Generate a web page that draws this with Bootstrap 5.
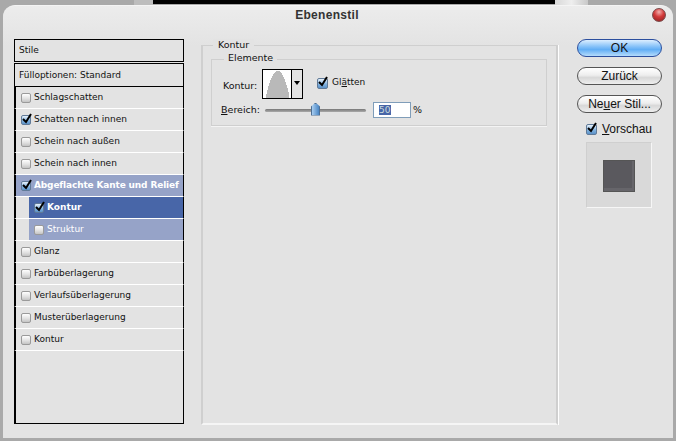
<!DOCTYPE html>
<html lang="de"><head><meta charset="utf-8"><title>Ebenenstil</title>
<link href="https://cdn.jsdelivr.net/npm/bootstrap@5.3.0/dist/css/bootstrap.min.css" rel="stylesheet">
<style>
html,body{height:441px;overflow:hidden}
body{background:#a9a9a9;font:9px/1 "DejaVu Sans",sans-serif;color:#111;width:676px}
.strip{height:5px}
.strip i{display:block;height:5px}
.s1{width:134px}.s2{width:19px;background:#bdbdbd}.s3{width:402px;height:4px!important;background:#000}.s4{width:33px;background:linear-gradient(90deg,#d8d8d8,#eee,#c8c8c8)}
.win{width:670px;height:433px;margin-left:3px;background:linear-gradient(#ececec,#e3e3e3 40px);border-radius:12px 12px 0 0;position:relative;border-top:1px solid #f4f4f4}
.ttl{height:32px;font:bold 12px/18px "Liberation Sans",sans-serif;color:#333;letter-spacing:.3px;padding-right:22px}
.redb{position:absolute;right:7px;top:2px;width:14px;height:14px;border-radius:50%;background:radial-gradient(circle at 50% 25%,#f2b0ae 0,#d33a3a 45%,#8c1e1e 100%);border:1px solid #7a4a4a}
.body2{padding-left:11px;height:400px}
.lst{width:170px;height:385px;margin-top:1px;background:#e3e3e3;border-radius:0;border:0}
.hd{border:1px solid #000;height:23px;padding-left:4px;line-height:20px;background:#e3e3e3}
.hd+.hd{margin-top:1px;height:24px;line-height:22px}
.rw{height:22px;border:0;border-radius:0!important;background:#e3e3e3;padding:0 0 0 5px;border-bottom:1px solid #fff;border-left:2px solid #000;border-right:1px solid #000;gap:3px;color:#111;white-space:nowrap}
.rw.sub{background:linear-gradient(90deg,#e3e3e3 13px,#96a3c8 13px);color:#fff}
.rw.sub>.cbx{margin-left:13px}
.rw.on{background:#96a3c8;color:#fff;font-weight:bold;letter-spacing:-.15px}
.rw.sel{background:linear-gradient(90deg,#e3e3e3 13px,#4866a8 13px);font-weight:bold}
.fill{flex:1;border:1px solid #000;border-top:0;border-left-width:2px}
.cbx{width:10px;height:10px;flex:none;border:1px solid #9a9a9a;border-radius:2px;background:linear-gradient(#fff,#e2e2e2 55%,#c4c4c4);position:relative;display:block}
.cbx.chk{background:linear-gradient(#e8f2fb,#7fb0de 60%,#5c92c8);border-color:#607a98}
.cbx svg{position:absolute;left:-1px;top:-3px;width:12px;height:12px}
.mid{width:357px;margin-left:17px;margin-top:7px;height:380px;border:2px solid #cfcfcf;border-top-width:1px;border-bottom-color:#f5f5f5;box-shadow:1px 0 0 #fff;position:relative}
.lg{position:absolute;background:#e3e3e3;padding:0 5px;font-size:10px;line-height:12px}
.lg1{left:10px;top:-7px;font-size:9.5px}
.inn{margin:13px 9px 0 8px;height:67px;border:1px solid #cfcfcf;position:relative;padding:9px 0 0 9px;box-shadow:0 1px 0 #f4f4f4}
.lg2{left:12px;top:-8px;padding:0 4px;font-size:9.5px}
.lb1{width:39px;margin-left:2px;padding-top:12px;font-size:9.5px}
.crv{width:41px;height:30px;border:1px solid #000;background:#fff;position:relative}
.crv b{position:absolute;right:0;top:0;bottom:0;width:11px;background:#e3e3e3;border-left:1px solid #000}
.crv b::after{content:"";position:absolute;left:2px;top:11px;border:3px solid transparent;border-top:4px solid #000;border-bottom:0}
.crv svg{position:absolute;left:1px;top:0;width:27px;height:28px}
u{text-underline-offset:1px}
.lb2{width:38px;font-size:9.5px}
.trk{width:101px;height:3px;margin-left:6px;background:linear-gradient(#777,#aaa);border-radius:2px;position:relative}
.thm{position:absolute;left:46px;top:-6px;width:9px;height:13px;background:linear-gradient(90deg,#a8cdf0,#4a86c4);border:1px solid #4d6f94;clip-path:polygon(50% 0,100% 30%,100% 100%,0 100%,0 30%)}
.inp{width:38px;height:16px;border:1px solid #7f9db9;background:#fff;margin-left:7px;padding:2px 2px 2px 5px;line-height:10px}
.inp span{background:#4866a8;color:#cdd;display:inline-block;padding-right:1px}
.pct{margin-left:2px;font-size:9.5px}
.rgt{width:85px;margin-left:19px;margin-top:1px}
.btnx{height:18px;width:85px;padding:0;border:1px solid #555;border-radius:9px;font:12px/16px "Liberation Sans",sans-serif;color:#111;background:linear-gradient(#fff,#eee 45%,#d8d8d8 60%,#eee);margin-bottom:10px}
.btnx.pri{background:linear-gradient(#dceeff,#7dbdf8 45%,#62aef5 60%,#b5dcfc);border-color:#2c4f9e}
.vsc{margin:-1px 0 0 9px;gap:5px;font:12px/14px "Liberation Sans",sans-serif;color:#111}
.vsc .cbx{width:11px;height:11px}
.prv{width:66px;height:66px;margin:6px 0 0 9px;background:#d9d9d9;border:1px solid #cfcfcf;border-right-color:#f6f6f6;border-bottom-color:#f6f6f6;padding-top:17px;padding-left:16px}
.prv i{display:block;width:32px;height:32px;background:#5a595e;border:1px solid #555;box-shadow:inset -2px -3px 0 #66656a}
.gl{margin-left:4px;margin-top:9px;font-size:9px}
.cbg{margin-left:14px;margin-top:9px;width:11px;height:11px}
.rowb{margin-top:3px}
</style></head><body>
<div class="strip d-flex"><i class="s1"></i><i class="s2"></i><i class="s3"></i><i class="s4"></i></div>
<div class="win">
 <div class="ttl text-center">Ebenenstil</div><span class="redb"></span>
 <div class="body2 d-flex align-items-start">
  <div class="lst list-group d-flex flex-column">
   <div class="hd">Stile</div>
   <div class="hd">Fülloptionen: Standard</div>
   <div class="rw list-group-item d-flex align-items-center"><span class="cbx"></span>Schlagschatten</div>
   <div class="rw list-group-item d-flex align-items-center"><span class="cbx chk"><svg viewBox="0 0 12 12"><path d="M2 6l3 3 5-8" fill="none" stroke="#000" stroke-width="2"/></svg></span>Schatten nach innen</div>
   <div class="rw list-group-item d-flex align-items-center"><span class="cbx"></span>Schein nach außen</div>
   <div class="rw list-group-item d-flex align-items-center"><span class="cbx"></span>Schein nach innen</div>
   <div class="rw on list-group-item d-flex align-items-center"><span class="cbx chk"><svg viewBox="0 0 12 12"><path d="M2 6l3 3 5-8" fill="none" stroke="#000" stroke-width="2"/></svg></span>Abgeflachte Kante und Relief</div>
   <div class="rw sub sel list-group-item d-flex align-items-center"><span class="cbx chk"><svg viewBox="0 0 12 12"><path d="M2 6l3 3 5-8" fill="none" stroke="#000" stroke-width="2"/></svg></span>Kontur</div>
   <div class="rw sub list-group-item d-flex align-items-center"><span class="cbx"></span>Struktur</div>
   <div class="rw list-group-item d-flex align-items-center"><span class="cbx"></span>Glanz</div>
   <div class="rw list-group-item d-flex align-items-center"><span class="cbx"></span>Farbüberlagerung</div>
   <div class="rw list-group-item d-flex align-items-center"><span class="cbx"></span>Verlaufsüberlagerung</div>
   <div class="rw list-group-item d-flex align-items-center"><span class="cbx"></span>Musterüberlagerung</div>
   <div class="rw list-group-item d-flex align-items-center"><span class="cbx"></span>Kontur</div>
   <div class="fill"></div>
  </div>
  <div class="mid">
   <span class="lg lg1">Kontur</span>
   <div class="inn">
    <span class="lg lg2">Elemente</span>
    <div class="d-flex align-items-start">
     <span class="lb1">Kontur:</span>
     <div class="crv"><svg viewBox="0 0 27 28" shape-rendering="crispEdges"><path d="M2 28V24H3V20H4V16H5V13H6V10H7V8H8V6H9V4H10V3H11V2H12V1H16V2H17V3H18V5H19V7H20V9H21V12H22V15H23V18H24V22H25V28z" fill="#b9b9b9"/></svg><b></b></div>
     <span class="cbx chk cbg"><svg viewBox="0 0 12 12"><path d="M2 6l3 3 5-8" fill="none" stroke="#000" stroke-width="2"/></svg></span>
     <span class="gl">Gl<u>ä</u>tten</span>
    </div>
    <div class="d-flex align-items-center rowb">
     <span class="lb2"><u>B</u>ereich:</span>
     <div class="trk"><span class="thm"></span></div>
     <div class="inp"><span>50</span></div>
     <span class="pct">%</span>
    </div>
   </div>
  </div>
  <div class="rgt d-flex flex-column">
   <button class="btn btnx pri">OK</button>
   <button class="btn btnx">Zurück</button>
   <button class="btn btnx">Ne<u>u</u>er Stil...</button>
   <div class="vsc d-flex align-items-center"><span class="cbx chk"><svg viewBox="0 0 12 12"><path d="M2 6l3 3 5-8" fill="none" stroke="#000" stroke-width="2"/></svg></span><span><u>V</u>orschau</span></div>
   <div class="prv"><i></i></div>
  </div>
 </div>
</div>
</body></html>
